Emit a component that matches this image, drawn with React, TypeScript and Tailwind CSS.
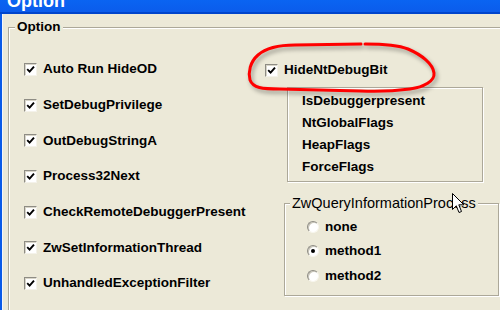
import type { ReactNode } from 'react';

const left = [
  'Auto Run HideOD',
  'SetDebugPrivilege',
  'OutDebugStringA',
  'Process32Next',
  'CheckRemoteDebuggerPresent',
  'ZwSetInformationThread',
  'UnhandledExceptionFilter',
];

const flags = ['IsDebuggerpresent', 'NtGlobalFlags', 'HeapFlags', 'ForceFlags'];

function Check() {
  return (
    <span className="flex h-[13px] w-[13px] shrink-0 items-center justify-center border border-t-[#8e8c84] border-l-[#8e8c84] border-r-[#f4f2ea] border-b-[#f4f2ea] bg-white shadow-[inset_1px_1px_0_#d8d5c8]">
      <svg width="9" height="9" viewBox="0 0 9 9">
        <path d="M1.2 4.2 L3.6 6.6 L8 1.6" stroke="#000" strokeWidth="1.9" fill="none" />
      </svg>
    </span>
  );
}

function Radio({ on }: { on?: boolean }) {
  return (
    <span className="flex h-[12px] w-[12px] shrink-0 items-center justify-center rounded-full border border-t-[#8e8c84] border-l-[#8e8c84] border-r-[#f8f6ee] border-b-[#f8f6ee] bg-white shadow-[inset_1px_1px_0_#c8c5b8]">
      {on && <span className="h-[4px] w-[4px] rounded-full bg-black" />}
    </span>
  );
}

function Group({ title, titleClass, className, children }: { title?: string; titleClass?: string; className: string; children: ReactNode }) {
  return (
    <div className={`relative border border-[#aca899] shadow-[inset_1px_1px_0_#fff,1px_1px_0_#fff] ${className}`}>
      {title && <span className={`absolute top-[-9px] bg-[#ece9d8] px-[2px] leading-[16px] text-black ${titleClass}`}>{title}</span>}
      {children}
    </div>
  );
}

export default function App() {
  return (
    <div className="relative flex h-[310px] w-[500px] flex-col overflow-hidden bg-[#ece9d8] font-['Liberation_Sans',Arial,sans-serif]">
      {/* title bar, mostly cropped */}
      <div className="h-[14px] shrink-0 overflow-hidden border-b-2 border-[#0045cc] bg-gradient-to-b from-[#0a64f2] to-[#0b5cec]">
        <div className="ml-[7px] mt-[-8px] text-[18px] font-bold leading-[18px] text-white">Option</div>
      </div>

      <div className="flex-1 border-l-2 border-[#0a5ae8] pl-[6px] pt-[13px] shadow-[inset_1px_0_0_#f4f6fc]">
        <Group title="Option" titleClass="left-[6px] text-[13.5px] font-bold" className="h-[320px] w-[520px] pl-[15px] pt-[35px]">
          <div className="flex text-[13.5px] font-bold text-black">
            <div className="flex w-[241px] flex-col gap-y-[22.67px]">
              {left.map((t) => (
                <label key={t} className="flex h-[13px] items-center gap-[6px] whitespace-nowrap">
                  <Check />
                  <span>{t}</span>
                </label>
              ))}
            </div>

            <div className="flex flex-col pt-[1px]">
              <label className="flex h-[13px] items-center gap-[6px] whitespace-nowrap">
                <Check />
                <span>HideNtDebugBit</span>
              </label>

              <Group className="ml-[22px] mt-[10px] h-[95px] w-[196px] pl-[14px] pt-[2px]">
                {flags.map((f) => (
                  <div key={f} className="leading-[22px]">{f}</div>
                ))}
              </Group>

              <Group
                title="ZwQueryInformationProcess"
                titleClass="left-[5px] text-[14.5px] font-normal"
                className="ml-[19px] mt-[21px] h-[93px] w-[215px] pl-[22px] pt-[17px]"
              >
                <div className="flex flex-col">
                  <label className="flex h-[12px] items-center gap-[6px]"><Radio /><span>none</span></label>
                  <label className="mt-[12px] flex h-[12px] items-center gap-[6px]"><Radio on /><span>method1</span></label>
                  <label className="mt-[13px] flex h-[12px] items-center gap-[6px]"><Radio /><span>method2</span></label>
                </div>
              </Group>
            </div>
          </div>
        </Group>
      </div>

      {/* red hand-drawn annotation */}
      <svg className="pointer-events-none absolute left-0 top-0 drop-shadow-[2px_3px_2px_rgba(0,0,0,0.35)]" width="500" height="310" viewBox="0 0 500 310">
        <path
          d="M365 44 C385 44 398 45 408 49 C422 55 433 64 434 73 C435 81 424 87 410 89 C395 91 380 92 360 91 L280 89 C262 89 253 88 250 80 C248 72 250 62 258 55 C266 48 280 45 295 45 L361 44"
          stroke="#ff0000"
          strokeWidth="3"
          fill="none"
          strokeLinecap="round"
        />
      </svg>

      {/* mouse pointer */}
      <svg className="pointer-events-none absolute left-[452px] top-[193px]" width="13" height="21" viewBox="0 0 13 21">
        <path d="M0.5 0.5 L0.5 16.5 L4.3 12.8 L7 19.5 L9.5 18.5 L6.8 11.8 L11.8 11.8 Z" fill="#fff" stroke="#000" strokeWidth="1" />
      </svg>
    </div>
  );
}
